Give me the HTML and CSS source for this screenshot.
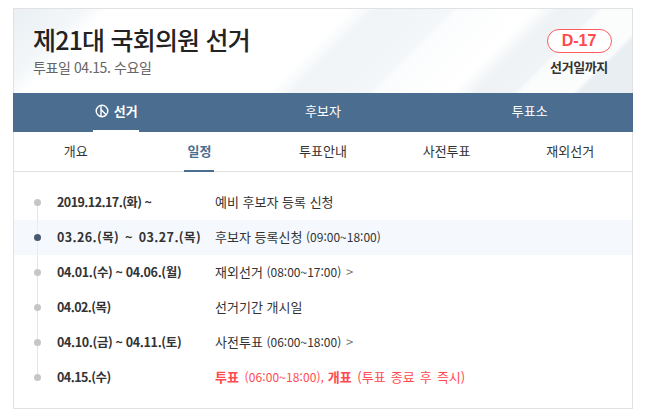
FILE: index.html
```html
<!DOCTYPE html>
<html lang="ko">
<head>
<meta charset="utf-8">
<title>제21대 국회의원 선거</title>
<link rel="stylesheet" href="styles.css">
</head>
<body>
<div class="card">
  <header class="hero">
    <div class="hero-text">
      <h1 class="title">제21대 국회의원 선거</h1>
      <p class="subtitle">투표일 04.15. 수요일</p>
    </div>
    <div class="dday">
      <span class="dday-badge">D-17</span>
      <span class="dday-label">선거일까지</span>
    </div>
  </header>
  <nav class="main-nav">
    <a class="main-tab is-active">
      <svg class="stamp" width="14" height="14" viewBox="0 0 14 14" fill="none" stroke="#fff" stroke-width="1.4"><circle cx="7" cy="7" r="5.8"/><path d="M6 1.2v11.6M6 5.5l5.4 5.6"/></svg>
      <span>선거</span>
    </a>
    <a class="main-tab">후보자</a>
    <a class="main-tab">투표소</a>
  </nav>
  <nav class="sub-nav">
    <a class="sub-tab">개요</a>
    <a class="sub-tab is-active">일정</a>
    <a class="sub-tab">투표안내</a>
    <a class="sub-tab">사전투표</a>
    <a class="sub-tab">재외선거</a>
  </nav>
  <ul class="timeline">
    <li class="row"><span class="date date-tight">2019.12.17.(화) ~</span><span class="desc">예비 후보자 등록 신청</span></li>
    <li class="row is-current"><span class="date">03.26.(목) ~ 03.27.(목)</span><span class="desc">후보자 등록신청 <span class="time">(09:00~18:00)</span></span></li>
    <li class="row"><span class="date">04.01.(수) ~ 04.06.(월)</span><span class="desc">재외선거 <span class="time">(08:00~17:00)</span> <i class="more">&gt;</i></span></li>
    <li class="row"><span class="date date-tight">04.02.(목)</span><span class="desc">선거기간 개시일</span></li>
    <li class="row"><span class="date">04.10.(금) ~ 04.11.(토)</span><span class="desc">사전투표 <span class="time">(06:00~18:00)</span> <i class="more">&gt;</i></span></li>
    <li class="row"><span class="date date-tight">04.15.(수)</span><span class="desc is-red"><b>투표</b> <span class="time">(06:00~18:00),</span> <b>개표</b> <span class="note">(투표 종료 후 즉시)</span></span></li>
  </ul>
</div>
</body>
</html>
```
FILE: styles.css
```css
* { box-sizing: border-box; }
html, body { margin: 0; padding: 0; background: #fff; }
body {
  padding: 8px 13px 0;
  font-family: "Noto Sans CJK KR", "Liberation Sans", sans-serif;
  color: #333;
}
.card {
  width: 620px;
  height: 401px;
  border: 1px solid #e1e1e1;
}
.hero {
  height: 84px;
  display: flex;
  justify-content: space-between;
  padding: 13px 20px 0 19px;
  background:
    linear-gradient(135deg, #e9eff3 0, #f4f7f9 10%, #fff 13.5%, #fff 48%, #f0f4f6 52%, #f4f7f9 62.5%, #fbfcfd 63.5%, #fff 74%, #eef2f5 78%, #f0f4f6 83%, #fbfcfc 84%, #fbfcfc 91.5%, #e8eef1 92.5%, #e8eef1 100%);
}
.title {
  margin: 0;
  font-size: 25px;
  line-height: 34px;
  font-weight: 500;
  color: #222;
  letter-spacing: -0.8px;
}
.subtitle {
  margin: 2px 0 0;
  font-size: 14px;
  line-height: 18px;
  color: #666;
  letter-spacing: -0.4px;
}
.dday {
  width: 66px;
  margin-top: 7px;
  display: flex;
  flex-direction: column;
  align-items: center;
}
.dday-badge {
  width: 65px;
  height: 24px;
  flex: none;
  border: 1px solid #ff5a5f;
  border-radius: 12px;
  background: #fff;
  color: #ff4b50;
  font-family: "Liberation Sans", sans-serif;
  font-weight: 700;
  font-size: 16px;
  line-height: 22px;
  text-align: center;
}
.dday-label {
  margin-top: 6px;
  font-size: 13px;
  line-height: 16px;
  font-weight: 700;
  color: #333;
  letter-spacing: -0.4px;
  white-space: nowrap;
}
.main-nav {
  height: 39px;
  margin-left: -1px;
  margin-right: -1px;
  display: grid;
  grid-template-columns: repeat(3, 1fr);
  background: #4b6d8f;
}
.main-tab {
  justify-self: center;
  height: 39px;
  padding: 0 6px 2px;
  display: flex;
  align-items: center;
  justify-content: center;
  gap: 5px;
  color: #fff;
  font-size: 13px;
  border-bottom: 2px solid transparent;
}
.main-tab.is-active {
  width: 46px;
  box-sizing: content-box;
  height: 35px;
  padding: 0 0 2px;
  font-weight: 700;
  border-bottom-color: #fff;
  white-space: nowrap;
}
.stamp { flex: none; }
.sub-nav {
  height: 40px;
  display: grid;
  grid-template-columns: repeat(5, 1fr);
  border-bottom: 1px solid #e1e1e1;
}
.sub-tab {
  justify-self: center;
  height: 40px;
  padding: 0 3px 2px;
  display: flex;
  align-items: center;
  font-size: 13px;
  color: #333;
  border-bottom: 2px solid transparent;
}
.sub-tab.is-active {
  color: #4b6d8f;
  font-weight: 700;
  border-bottom-color: #4b6d8f;
}
.timeline {
  list-style: none;
  margin: 13px 0 0;
  padding: 0;
  background: linear-gradient(#e1e4ea, #e1e4ea) 23px 17px / 1px 175px no-repeat;
}
.row {
  height: 35px;
  display: flex;
  align-items: center;
  padding-left: 43px;
  padding-bottom: 2px;
  font-size: 13px;
  color: #333;
  position: relative;
}
.row::before {
  content: "";
  position: absolute;
  left: 20px;
  top: 14px;
  width: 7px;
  height: 7px;
  border-radius: 50%;
  background: #c6c6c6;
}
.row.is-current { background: rgba(238, 245, 251, 0.6); }
.row.is-current::before { background: #4a5a6e; }
.date {
  width: 159px;
  flex: none;
  font-weight: 700;
  font-size: 12.5px;
  letter-spacing: -0.35px;
  color: #333;
  white-space: nowrap;
}
.date.date-tight { letter-spacing: -0.55px; }
.is-current .date { letter-spacing: 0.4px; word-spacing: 2px; }
.desc { white-space: nowrap; margin-left: -1px; }
.time { font-size: 12px; }
.note { word-spacing: 1.5px; }
.desc.is-red { color: #ff4b50; }
.desc.is-red .time { letter-spacing: 0.1px; }
.desc.is-red b { margin-right: 2px; }
.more {
  font-style: normal;
  color: #777;
  margin-left: 1px;
}
```
